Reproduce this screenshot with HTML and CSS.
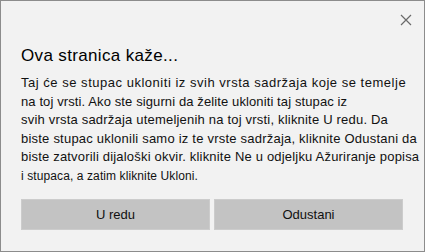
FILE: index.html
```html
<!DOCTYPE html>
<html>
<head>
<meta charset="utf-8">
<link rel="stylesheet" href="styles.css">
</head>
<body>
<div class="dialog">
  <div class="topbar">
    <svg class="close" width="12" height="12" viewBox="0 0 12 12"><path d="M1 1 L11 11 M11 1 L1 11" stroke="#6a6a6a" stroke-width="1.2" fill="none"/></svg>
  </div>
  <h1 class="title">Ova stranica kaže...</h1>
  <p class="message">
    <span class="line l1">Taj će se stupac ukloniti iz svih vrsta sadržaja koje se temelje</span>
    <span class="line l2">na toj vrsti. Ako ste sigurni da želite ukloniti taj stupac iz</span>
    <span class="line l3">svih vrsta sadržaja utemeljenih na toj vrsti, kliknite U redu. Da</span>
    <span class="line l4">biste stupac uklonili samo iz te vrste sadržaja, kliknite Odustani da</span>
    <span class="line l5">biste zatvorili dijaloški okvir. kliknite Ne u odjeljku Ažuriranje popisa</span>
    <span class="line l6">i stupaca, a zatim kliknite Ukloni.</span>
  </p>
  <div class="buttons">
    <button class="btn">U redu</button>
    <button class="btn">Odustani</button>
  </div>
</div>
</body>
</html>
```
FILE: styles.css
```css
html, body {
  margin: 0;
  padding: 0;
  background: #f2f2f2;
}
.dialog {
  box-sizing: border-box;
  width: 425px;
  height: 252px;
  border: 1px solid #8c8c8c;
  background: #f2f2f2;
  padding: 0 20px 0 20px;
  font-family: "Liberation Sans", Arial, sans-serif;
  color: #111;
}
.topbar {
  display: flex;
  justify-content: flex-end;
  height: 32px;
  padding-top: 13px;
  box-sizing: border-box;
  margin-right: -8px;
}
.close {
  display: block;
}
.title {
  margin: 0;
  font-size: 17px;
  letter-spacing: 0.35px;
  font-weight: normal;
  line-height: 20px;
  color: #000;
  padding-top: 12.5px;
}
.message {
  margin: 8.5px 0 0 0;
  font-size: 13px;
  line-height: 18.5px;
  white-space: nowrap;
}
.line {
  display: block;
}
.l1 { letter-spacing: 0.52px; }
.l2 { letter-spacing: 0.11px; }
.l3 { letter-spacing: 0.2px; }
.l4 { letter-spacing: 0.22px; }
.l5 { letter-spacing: 0.19px; }
.l6 {
  font-size: 12px;
  letter-spacing: 0.1px;
}
.buttons {
  display: flex;
  gap: 4px;
  margin-top: 14px;
}
.btn {
  width: 189px;
  height: 31px;
  background: #c3c3c3;
  border: 1px solid #cccccc;
  font-family: "Liberation Sans", Arial, sans-serif;
  font-size: 13px;
  color: #111;
  padding: 0;
}
```
